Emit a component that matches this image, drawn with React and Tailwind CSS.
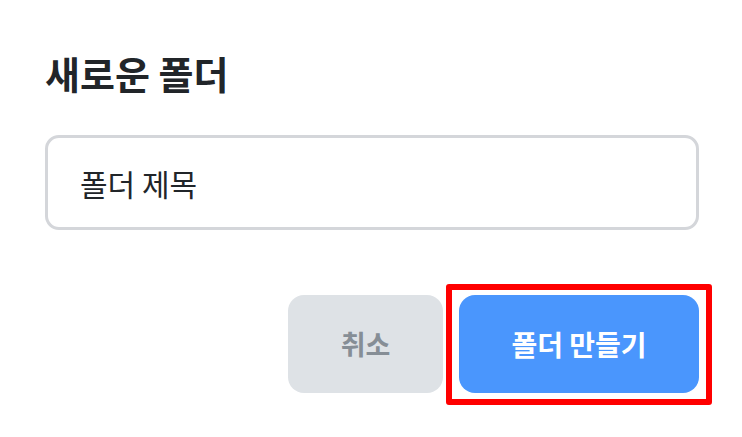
export default function App() {
  return (
    <div
      className="w-[742px] h-[437px] bg-white pl-[45px] pr-[43px] pt-[53px]"
      style={{ fontFamily: '"Noto Sans CJK KR", "Noto Sans", sans-serif' }}
    >
      {/* Title */}
      <h1 className="text-[38px] leading-[40px] font-bold text-[#212529]">
        새로운 폴더
      </h1>

      {/* Folder name input */}
      <input
        type="text"
        placeholder="폴더 제목"
        className="mt-[42px] w-full h-[95px] rounded-[14px] border-[3px] border-[#d4d6da] px-[32px] text-[30px] text-[#212529] placeholder:text-[#212529] outline-none"
      />

      {/* Actions */}
      <div className="mt-[65px] flex justify-end gap-[16px]">
        <button className="w-[155px] h-[98px] rounded-[16px] bg-[#dee2e6] text-[27px] font-bold text-[#868e96]">
          취소
        </button>
        <div className="relative">
          <button className="w-[240px] h-[98px] rounded-[16px] bg-[#4a96fd] text-[28px] font-bold text-white">
            폴더 만들기
          </button>
          <div className="absolute -left-[13px] -right-[13px] -top-[11px] -bottom-[12px] border-[6px] border-[#ff0000] rounded-[3px] pointer-events-none" />
        </div>
      </div>
    </div>
  );
}
